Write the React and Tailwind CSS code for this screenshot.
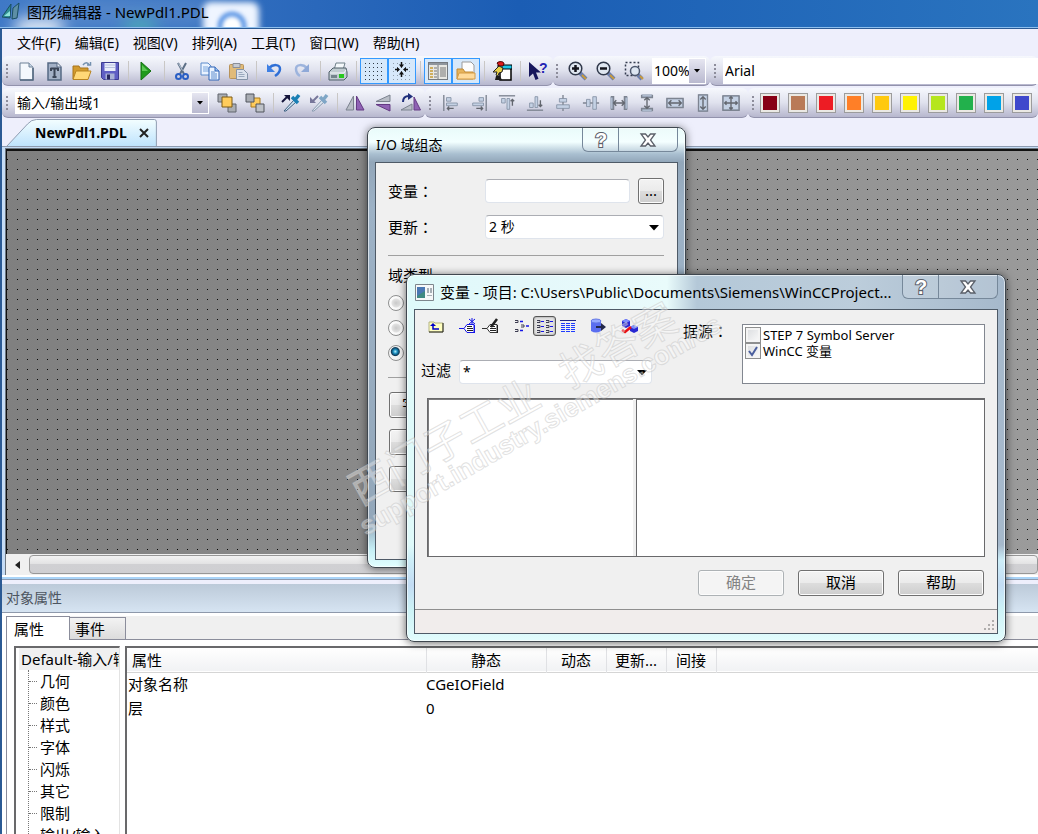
import React, { useState } from "react";

const MENUS = ["文件(F)", "编辑(E)", "视图(V)", "排列(A)", "工具(T)", "窗口(W)", "帮助(H)"];

const SWATCHES = [
  { name: "深红", color: "bg-[#880015]" },
  { name: "棕色", color: "bg-[#b97a57]" },
  { name: "红色", color: "bg-[#ed1c24]" },
  { name: "橙色", color: "bg-[#ff7f27]" },
  { name: "金色", color: "bg-[#ffc90e]" },
  { name: "黄色", color: "bg-[#fff200]" },
  { name: "酸橙", color: "bg-[#b5e61d]" },
  { name: "绿色", color: "bg-[#22b14c]" },
  { name: "青绿", color: "bg-[#00a2e8]" },
  { name: "靛蓝", color: "bg-[#3f48cc]" },
];

const TREE = ["几何", "颜色", "样式", "字体", "闪烁", "其它", "限制", "输出/输入"];

const ROWS = [
  { name: "对象名称", value: "CGeIOField" },
  { name: "层", value: "0" },
];

const TITLE_GLASS =
  "bg-[linear-gradient(180deg,#e9fbfa_0px,#f2ffff_14px,#a9bfd0_26px,#92a6b9_34px,#9db2c6_80px,#93a7ba_90%,#c5eef5_96%,#e2ffff_100%)]";
const FRONT_GLASS =
  "bg-[linear-gradient(180deg,transparent_0,transparent_270px,#cdeef8_285px,#c3dcf4_310px,#cdf3f6_335px,#e2fcfd_100%),linear-gradient(90deg,#dffafa_0px,#e4f8fa_120px,#e9fbfb_260px,#b4c8d8_290px,#bccddb_450px,#a5b8cb_600px)]";

/* ---------- icons ---------- */

function Svg({ children, className = "h-5 w-5" }) {
  return (
    <svg viewBox="0 0 20 20" className={className} fill="none" aria-hidden="true">
      {children}
    </svg>
  );
}

const icons = {
  page: (
    <Svg>
      <path d="M4 2h9l4 4v13H4z" fill="#f4f8fd" stroke="#6f8298" />
      <path d="M13 2v4h4" fill="#c7d6e6" stroke="#6f8298" />
      <path d="M4 19h13V7" stroke="#52677f" strokeWidth="1.500" />
    </Svg>
  ),
  template: (
    <Svg>
      <path d="M4 2h9l4 4v13H4z" fill="#a3b1c7" stroke="#566984" strokeWidth="1.500" />
      <path d="M13 2v4h4" fill="#e6edf6" stroke="#566984" />
      <path d="M6.500 7.500h8M10.500 8v8M8.500 16h4M7 7v3M14 7v3" stroke="#3a4557" strokeWidth="2" />
    </Svg>
  ),
  open: (
    <Svg>
      <path d="M1 5h6l1 2h8v11H1z" fill="#d29a2d" stroke="#a8741a" />
      <path d="M4 10h15l-3 8.500H1z" fill="#ffd877" stroke="#b98420" />
      <path d="M11 4c2-3 5-3 6 0m-2 0h3.500V1" stroke="#7390ae" strokeWidth="1.500" />
    </Svg>
  ),
  save: (
    <Svg>
      <path d="M1.500 1.500h17v17h-15l-2-2z" fill="#5f5fc4" stroke="#3d3d92" />
      <path d="M4.500 2h11v8h-11z" fill="#e9edfa" />
      <path d="M5 4h10M5 6.500h10" stroke="#b8c2de" />
      <path d="M5.500 12.500h9v6h-9z" fill="#a9b2d6" />
      <path d="M7 13.500h3v5H7z" fill="#28285e" />
    </Svg>
  ),
  play: (
    <Svg>
      <path d="M5 1v18l10-9z" fill="#1f9a1b" stroke="#157013" />
      <path d="M6 4v6l6 0z" fill="#5cc754" />
    </Svg>
  ),
  cut: (
    <Svg>
      <path d="M6 2l6 11M14 2L8 13" stroke="#5c6f86" strokeWidth="2" />
      <path d="M6.500 2.500l4 7" stroke="#b9c7d6" />
      <circle cx="6.500" cy="15.500" r="2.500" stroke="#2a5fc4" strokeWidth="2" />
      <circle cx="13.500" cy="15.500" r="2.500" stroke="#2a5fc4" strokeWidth="2" />
    </Svg>
  ),
  copy: (
    <Svg>
      <path d="M1 2h7l3 3v9H1z" fill="#eaf3ff" stroke="#5d8ccc" />
      <path d="M3 6h5M3 8h6M3 10h6" stroke="#7ba6dd" />
      <path d="M9 6h6l4 4v9H9z" fill="#eaf3ff" stroke="#2c62b6" />
      <path d="M15 6v4h4" fill="#9cc0ee" stroke="#2c62b6" />
      <path d="M11 11h4M11 13h6M11 15h6M11 17h6" stroke="#5d8ccc" />
    </Svg>
  ),
  paste: (
    <Svg>
      <rect x="1.500" y="3.500" width="14" height="14" rx="1" fill="#e0bb79" stroke="#b8935a" />
      <path d="M5 2.500h7v4H5z" fill="#c7cbd2" stroke="#8a8f98" />
      <path d="M8.500 8.500h7l4 4v6h-11z" fill="#dce3ee" stroke="#8594a8" />
      <path d="M10.500 11.500h4M10.500 13.500h6M10.500 15.500h6" stroke="#9aa9bd" />
    </Svg>
  ),
  undo: (
    <Svg>
      <path d="M5 7c4-4 11-4 11 1 0 3-2 5-5 7" stroke="#2f6fd6" strokeWidth="2.500" />
      <path d="M3 3v8h8z" fill="#3f80e4" />
    </Svg>
  ),
  redo: (
    <Svg>
      <path d="M15 7c-4-4-11-4-11 1 0 3 1 5 4 7" stroke="#9db4dd" strokeWidth="2.500" />
      <path d="M17 3v8H9z" fill="#8fa9d8" />
    </Svg>
  ),
  print: (
    <Svg>
      <path d="M6 9l2-7h9l-2 7z" fill="#f4f8fb" stroke="#6f8089" />
      <path d="M1 11l4-4h13l1 4v5l-3 3H1z" fill="#c0ccd1" stroke="#4f5f68" />
      <path d="M2 12h14l2-3" stroke="#f4f8fb" />
      <path d="M3 14h6v3H3z" fill="#74848c" />
      <path d="M11 13h5v4h-5z" fill="#28c81e" />
    </Svg>
  ),
  grid: (
    <Svg>
      <path d="M1 2.500h18M1 6.500h18M1 10.500h18M1 14.500h18M1 18.500h18" stroke="#2f3a46" strokeDasharray="1 3" />
    </Svg>
  ),
  snap: (
    <Svg>
      <path d="M1 2.500h18M1 6.500h18M1 10.500h18M1 14.500h18M1 18.500h18" stroke="#8f9daa" strokeDasharray="1 3" />
      <path d="M9.500 1v4M9.500 12v4M3 8.500h4M12 8.500h4" stroke="#111" strokeWidth="1.500" />
      <path d="M7 3.500h5l-2.500 3.500zM7 13.500h5L9.500 10zM5 6v5l3-2.500zM14 6v5l-3-2.500z" fill="#111" />
    </Svg>
  ),
  props: (
    <Svg>
      <rect x=".5" y="1.500" width="19" height="17" fill="#e8e8e3" stroke="#747a80" />
      <path d="M1 3h18" stroke="#8f969d" strokeWidth="2" />
      <path d="M10 4v15" stroke="#747a80" />
      <path d="M2 7h3M2 10h3M2 13h3M2 16h3" stroke="#c59b35" strokeWidth="1.500" />
      <path d="M6 7h3M6 10h3M6 13h3M6 16h3M12 7h6M12 9h6M12 11h6M12 13h6M12 15h6" stroke="#777" />
    </Svg>
  ),
  library: (
    <Svg>
      <path d="M6 1h9l3 3v9H6z" fill="#fdfdfd" stroke="#9b9b9b" />
      <path d="M1 8h6l2 3h8v7H1z" fill="#e6b45c" stroke="#c08a35" />
      <path d="M3 12h16v6H1z" fill="#ffdb9b" stroke="#d49c46" />
    </Svg>
  ),
  bird: (
    <Svg>
      <path d="M8 7h11v12H8z" fill="#fff" stroke="#000" strokeWidth="1.500" />
      <path d="M6 4h14v4H6z" fill="#19c6e8" stroke="#000" />
      <path d="M5 2c2-2 7-2 7 1l-1 2H7z" fill="#e01b1b" stroke="#400" />
      <path d="M1 11l6-6 4 2-1 4-3 1-1 3-2-1 1-3z" fill="#e9d24c" stroke="#222" />
      <path d="M3 19l1-4h4l2 4z" fill="#1c1c1c" />
    </Svg>
  ),
  whatsThis: (
    <Svg>
      <path d="M1 1v15l4-3.500 2.500 6.500 3-1.200L8 11.500h5z" fill="#17175c" />
      <text x="11" y="12" fontSize="14" fontWeight="700" fontFamily="Liberation Sans" fill="#2424b4">
        ?
      </text>
    </Svg>
  ),
  zoomIn: (
    <Svg>
      <path d="M12 12l6 6" stroke="#6d7fae" strokeWidth="4" />
      <path d="M14 14l4 4" stroke="#c79a3d" strokeWidth="2" />
      <circle cx="7.500" cy="7.500" r="6.300" fill="#dfe6f0" stroke="#30384a" strokeWidth="1.500" />
      <path d="M7.500 4v7M4 7.500h7" stroke="#14141c" strokeWidth="2.500" />
    </Svg>
  ),
  zoomOut: (
    <Svg>
      <path d="M12 12l6 6" stroke="#6d7fae" strokeWidth="4" />
      <path d="M14 14l4 4" stroke="#c79a3d" strokeWidth="2" />
      <circle cx="7.500" cy="7.500" r="6.300" fill="#dfe6f0" stroke="#30384a" strokeWidth="1.500" />
      <path d="M4 7.500h7" stroke="#14141c" strokeWidth="2.500" />
    </Svg>
  ),
  zoomArea: (
    <Svg>
      <path d="M1.500 1.500h13v13h-13z" stroke="#333b4e" strokeWidth="1.500" strokeDasharray="2 2" />
      <path d="M14 14l4 4" stroke="#6d7fae" strokeWidth="4" />
      <path d="M16 15l3 3" stroke="#c79a3d" strokeWidth="2" />
      <circle cx="11" cy="10" r="4.500" fill="#dde6f2" stroke="#4d586e" strokeWidth="1.500" />
    </Svg>
  ),
  toFront: (
    <Svg>
      <path d="M1 1h9v8H1z" fill="#a9adb3" stroke="#60656c" />
      <path d="M11 11h8v8h-8z" fill="#a9adb3" stroke="#60656c" />
      <path d="M5 4h10v10H5z" fill="#ffcc5c" stroke="#7c5a14" />
    </Svg>
  ),
  toBack: (
    <Svg>
      <path d="M6 5h9v9H6z" fill="#ffcc5c" stroke="#a97a1d" />
      <path d="M1 1h8v8H1z" fill="#a9adb3" stroke="#50555c" />
      <path d="M11 11h8v8h-8z" fill="#bec2c8" stroke="#50555c" />
    </Svg>
  ),
  pickUp: (
    <Svg>
      <path d="M3 18L13 7l2 2L5 18z" fill="#cfe4f2" stroke="#3c5f80" />
      <path d="M11 4l6 6M14 7l4-5" stroke="#1a7fb4" strokeWidth="3.500" />
      <path d="M1 9l6-6" stroke="#14143a" strokeWidth="2" />
      <path d="M3 2h6v6z" fill="#14143a" />
    </Svg>
  ),
  drop: (
    <Svg>
      <path d="M3 18L13 7l2 2L5 18z" fill="#dde6ef" stroke="#8a9bb0" />
      <path d="M11 4l6 6M14 7l4-5" stroke="#7fa6c6" strokeWidth="3.500" />
      <path d="M3 9l6-6" stroke="#77779a" strokeWidth="2" />
      <path d="M1 4v6h6z" fill="#77779a" />
    </Svg>
  ),
  mirrorH: (
    <Svg>
      <path d="M8.500 3v14H1z" fill="#b9bec7" stroke="#7b828e" />
      <path d="M11.500 3v14H19z" fill="#8f62b4" stroke="#643a84" />
    </Svg>
  ),
  mirrorV: (
    <Svg>
      <path d="M17 8.500V2L3 8.500z" fill="#b9bec7" stroke="#7b828e" />
      <path d="M17 11.500V18L3 11.500z" fill="#8f62b4" stroke="#643a84" />
    </Svg>
  ),
  rotate: (
    <Svg>
      <path d="M0 17l11-6v6z" fill="#b9bec7" stroke="#7b828e" />
      <path d="M13 4v13h6.500z" fill="#8f62b4" stroke="#643a84" />
      <path d="M2 9c0-5 3-6 6-6" stroke="#20307c" strokeWidth="2" />
      <path d="M7 0l5 3.500L7 7z" fill="#20307c" />
    </Svg>
  ),
};

/* greyed alignment icons */
const alignIcons = [
  ["左对齐", "M2 1v18", "M5 4h5v4H5zM5 10h12v3H5z", "M13 16H6m2-2l-2 2 2 2"],
  ["右对齐", "M18 1v18", "M10 4h5v4h-5zM3 10h12v3H3z", "M7 16h7m-2-2l2 2-2 2"],
  ["顶端对齐", "M1 2h18", "M4 5h4v5H4zM10 5h3v12h-3z", "M16 13V6m-2 2l2-2 2 2"],
  ["底端对齐", "M1 18h18", "M4 10h4v5H4zM10 3h3v12h-3z", "M16 7v7m-2-2l2 2 2-2"],
  ["水平居中", "M10 1v4M10 9v3M10 16v3", "M6 5h8v4H6zM3 12h14v4H3z", ""],
  ["垂直居中", "M1 10h4M9 10h3M16 10h3", "M5 6h4v8H5zM12 3h4v14h-4z", ""],
  ["水平间距", "M1 3h3v14H1M19 3h-3v14h3", "M1 3h2v14H1zM17 3h2v14h-2z", "M5 10h10M7 7l-3 3 3 3M13 7l3 3-3 3"],
  ["垂直间距", "M4 1v3h12V1M4 19v-3h12v3", "M4 1h12v2H4zM4 17h12v2H4z", "M10 5v10M7 7l3-3 3 3M7 13l3 3 3-3"],
  ["等宽", "M1 5h18v10H1z", "M1 5h18v10H1z", "M3 10h14M6 7l-3 3 3 3M14 7l3 3-3 3"],
  ["等高", "M5 1h10v18H5z", "M5 1h10v18H5z", "M10 3v14M7 6l3-3 3 3M7 14l3 3 3-3"],
  ["等宽高", "M1 2h18v16H1z", "M1 2h18v16H1z", "M10 3v14M3 10h14M8 5l2-2 2 2M8 15l2 2 2-2M5 8l-2 2 2 2M15 8l2 2-2 2"],
];

function ToolButton({ label, active, children }) {
  return (
    <button
      type="button"
      aria-label={label}
      className={`flex h-[26px] w-7 shrink-0 items-center justify-center border ${
        active ? "border-[#3399ff] bg-[#d6e8fa]" : "border-transparent"
      }`}
    >
      {children}
    </button>
  );
}

function Separator() {
  return (
    <div className="flex w-2 shrink-0 justify-center">
      <div className="h-5 w-px bg-[#c9c7c5]" />
    </div>
  );
}

function Grip() {
  return (
    <div className="flex w-1 shrink-0 flex-col gap-[2px]">
      <i className="h-[2px] w-[2px] bg-[#8d8d9b]" />
      <i className="h-[2px] w-[2px] bg-[#8d8d9b]" />
      <i className="h-[2px] w-[2px] bg-[#8d8d9b]" />
      <i className="h-[2px] w-[2px] bg-[#8d8d9b]" />
    </div>
  );
}

function Strip({ children, className = "" }) {
  return (
    <div
      className={`flex h-[30px] items-center rounded-md border-b border-[#9292ac] bg-linear-to-b from-[#f6f8fd] via-[#e0e2ee] to-[#b7b7ce] ${className}`}
    >
      {children}
    </div>
  );
}

// fullwidth colon drawn in the middle of its cell
function Colon() {
  return <span className="font-['Noto_Sans_CJK_TC',sans-serif]">：</span>;
}

function ToolCombo({ label, value, className }) {
  return (
    <div className={`relative shrink-0 border border-white bg-white ${className}`}>
      <select
        aria-label={label}
        className="block h-full w-full appearance-none overflow-visible pl-px text-sm leading-[18px] text-black outline-none"
      >
        <option>{value}</option>
      </select>
      <span className="pointer-events-none absolute inset-y-0 right-0 flex w-4 items-center justify-center bg-linear-to-b from-[#e6e6f1] to-[#b9b9cf]">
        <svg viewBox="0 0 6 4" className="h-1 w-[6px]" aria-hidden="true">
          <path d="M0 0h6L3 3.500z" fill="#000" />
        </svg>
      </span>
    </div>
  );
}

function FieldCombo({ id, value, className = "" }) {
  return (
    <div className={`relative h-6 rounded-sm border border-[#dfe4ec] border-t-[#abadb3] bg-white ${className}`}>
      <select id={id} className="block h-full w-full appearance-none pl-[3px] text-sm leading-5 outline-none">
        <option>{value}</option>
      </select>
      <svg viewBox="0 0 10 6" className="pointer-events-none absolute right-1 top-[9px] h-[6px] w-[10px]" aria-hidden="true">
        <path d="M0 0h10L5 5.500z" fill="#000" />
      </svg>
    </div>
  );
}

function CaptionButtons() {
  return (
    <div className="flex h-6 shrink-0 overflow-hidden rounded-b-md border border-t-0 border-[#76889a] bg-white/15">
      <button type="button" aria-label="帮助" className="flex w-9 items-center justify-center border-r border-[#76889a]">
        <svg viewBox="0 0 20 20" className="h-5 w-5">
          <text
            x="4"
            y="17"
            fontSize="20"
            fontWeight="700"
            fontFamily="Liberation Sans"
            fill="#fff"
            stroke="#5b6069"
            strokeWidth="2"
            paintOrder="stroke"
          >
            ?
          </text>
        </svg>
      </button>
      <button type="button" aria-label="关闭" className="flex w-[58px] items-center justify-center">
        <svg viewBox="0 0 18 16" className="h-4 w-[18px]" aria-hidden="true">
          <path
            d="M2 2h4.500L9 5l2.500-3H16l-4.500 6 4.500 6h-4.500L9 11l-2.500 3H2l4.500-6z"
            fill="#fff"
            stroke="#5b6069"
            strokeWidth="1.300"
          />
        </svg>
      </button>
    </div>
  );
}

function PushButton({ children, disabled, className = "" }) {
  return (
    <button
      type="button"
      disabled={disabled}
      className={`h-[26px] shrink-0 rounded-[3px] border border-[#707070] bg-[linear-gradient(180deg,#f3f3f3,#ebebeb_48%,#dddddd_50%,#cdcdcd)] pb-[2px] text-[15px] leading-5 shadow-[inset_0_0_0_1px_#fcfcfc] disabled:border-[#adb2b5] disabled:bg-[#f4f4f4] disabled:bg-none disabled:text-[#838383] ${className}`}
    >
      {children}
    </button>
  );
}

/* ---------- main window ---------- */

function TitleBar() {
  return (
    <header className="relative flex h-7 shrink-0 items-start overflow-hidden border-b border-[#8fc0ee] bg-linear-to-r from-[#3f79c6] via-[#1b5db4] to-[#2a74bf]">
      <div className="absolute left-[22px] top-[3px] h-5 w-[196px] rounded-full bg-[#7fa5d8] opacity-60 blur-md" />
      <div className="absolute left-4 top-[20px] h-4 w-[46px] bg-white blur-sm" />
      <div className="absolute left-[124px] top-[19px] h-4 w-8 rounded-full bg-[#4db6b4] opacity-80 blur-sm" />
      <div className="absolute left-[203px] top-[2px] h-9 w-14 rounded-lg bg-[#eff5ff] blur-[3px]" />
      <div className="absolute left-[218px] top-[12px] h-8 w-7 rounded-full border-4 border-[#3f83e0] bg-white blur-[2px]" />
      <svg viewBox="0 0 18 18" className="relative ml-[2px] mt-[2px] h-[18px] w-[18px]" aria-hidden="true">
        <path d="M0 15L9 2l-1 14z" fill="#2f8f94" stroke="#1b4f63" />
        <path d="M11 6l6-5-2 15-5 1z" fill="#5d8fa5" stroke="#1b4f63" />
        <path d="M2 14l6-5v5z" fill="#8fe3d8" />
      </svg>
      <h1 className="relative ml-[7px] truncate text-[15px] leading-6">图形编辑器 - NewPdl1.PDL</h1>
    </header>
  );
}

function Toolbars() {
  return (
    <div className="flex shrink-0 flex-col gap-[2px] overflow-hidden">
      <div className="flex">
        <Strip className="shrink-0 pl-1 pr-px">
          <Grip />
          <div className="ml-[2px] flex">
            <ToolButton label="新建">{icons.page}</ToolButton>
            <ToolButton label="新建模板">{icons.template}</ToolButton>
            <ToolButton label="打开">{icons.open}</ToolButton>
            <ToolButton label="保存">{icons.save}</ToolButton>
          </div>
          <Separator />
          <ToolButton label="运行">{icons.play}</ToolButton>
          <Separator />
          <ToolButton label="剪切">{icons.cut}</ToolButton>
          <ToolButton label="复制">{icons.copy}</ToolButton>
          <ToolButton label="粘贴">{icons.paste}</ToolButton>
          <Separator />
          <ToolButton label="撤消">{icons.undo}</ToolButton>
          <ToolButton label="重做">{icons.redo}</ToolButton>
          <Separator />
          <ToolButton label="打印">{icons.print}</ToolButton>
          <Separator />
          <ToolButton label="网格" active>{icons.grid}</ToolButton>
          <ToolButton label="对齐网格" active>{icons.snap}</ToolButton>
          <Separator />
          <ToolButton label="对象属性" active>{icons.props}</ToolButton>
          <ToolButton label="库" active>{icons.library}</ToolButton>
          <Separator />
          <ToolButton label="向导">{icons.bird}</ToolButton>
          <Separator />
          <ToolButton label="帮助">{icons.whatsThis}</ToolButton>
        </Strip>
        <Strip className="shrink-0 gap-1 pl-[3px] pr-1">
          <Grip />
          <div className="flex">
            <ToolButton label="放大">{icons.zoomIn}</ToolButton>
            <ToolButton label="缩小">{icons.zoomOut}</ToolButton>
            <ToolButton label="缩放区域">{icons.zoomArea}</ToolButton>
          </div>
          <ToolCombo label="缩放比例" value="100%" className="h-[26px] w-[54px]" />
        </Strip>
        <Strip className="min-w-0 flex-1 gap-[5px] pl-1">
          <Grip />
          <input
            aria-label="字体"
            defaultValue="Arial"
            className="h-[26px] min-w-0 flex-1 bg-white px-[2px] text-sm outline-none"
          />
        </Strip>
      </div>

      <div className="flex">
        <Strip className="shrink-0 pl-1">
          <Grip />
          <ToolCombo label="对象" value="输入/输出域1" className="ml-[5px] mr-1 h-[22px] w-[194px]" />
          <ToolButton label="置前">{icons.toFront}</ToolButton>
          <ToolButton label="置后">{icons.toBack}</ToolButton>
          <Separator />
          <ToolButton label="拾取属性">{icons.pickUp}</ToolButton>
          <ToolButton label="分配属性">{icons.drop}</ToolButton>
          <Separator />
          <ToolButton label="水平镜像">{icons.mirrorH}</ToolButton>
          <ToolButton label="垂直镜像">{icons.mirrorV}</ToolButton>
          <ToolButton label="旋转">{icons.rotate}</ToolButton>
        </Strip>
        <Strip className="shrink-0 gap-1 pl-1 pr-[3px]">
          <Grip />
          <div className="flex">
            {alignIcons.map(([label, line, box, arrow]) => (
              <ToolButton key={label} label={label}>
                <Svg className="h-[18px] w-[18px]">
                  <path d={box} fill="#c4d1e4" stroke="#8995a8" />
                  <path d={line} stroke="#7d8491" strokeWidth="1.500" />
                  <path d={arrow} stroke="#62666e" strokeWidth="1.500" />
                </Svg>
              </ToolButton>
            ))}
          </div>
        </Strip>
        <Strip className="min-w-0 flex-1 gap-1 overflow-hidden pl-1">
          <Grip />
          <div className="flex gap-2">
            {SWATCHES.map((s) => (
              <button
                key={s.name}
                type="button"
                aria-label={s.name}
                className={`h-5 w-5 shrink-0 border border-[#9c9c9c] shadow-[inset_0_0_0_2px_#ebe9e4] ${s.color}`}
              />
            ))}
          </div>
        </Strip>
      </div>
    </div>
  );
}

function DocumentArea() {
  return (
    <section className="flex min-h-0 shrink-0 flex-col">
      <div className="flex h-[29px] items-end border-b border-[#8e9bb0]">
        <div className="relative ml-1 flex h-[27px] items-center gap-3 pl-[29px] pr-2">
          <svg viewBox="0 0 154 27" preserveAspectRatio="none" className="absolute inset-0 h-full w-full" aria-hidden="true">
            <defs>
              <linearGradient id="docTab" x1="0" y1="0" x2="0" y2="1">
                <stop offset="0" stopColor="#f3feff" />
                <stop offset="1" stopColor="#bfe3fd" />
              </linearGradient>
            </defs>
            <path d="M1 27L22 5Q26 .5 31 .5H151.500Q153.500 .5 153.500 3V27" fill="url(#docTab)" stroke="#8e9bb0" />
          </svg>
          <span className="relative text-sm font-bold leading-5">NewPdl1.PDL</span>
          <button type="button" aria-label="关闭" className="relative">
            <svg viewBox="0 0 10 10" className="h-[10px] w-[10px]" aria-hidden="true">
              <path d="M1 1l8 8M9 1L1 9" stroke="#222" strokeWidth="2" />
            </svg>
          </button>
        </div>
      </div>
      <div className="border-l-[3px] border-t border-[#c5dcf6]">
        <div className="border-l border-t border-[#6e7780]">
          <div className="border-l border-t-2 border-[#111] bg-[conic-gradient(from_270deg_at_1px_1px,#000_90deg,transparent_0),linear-gradient(100deg,#7f7f7f,#9b9b9b)] bg-[length:10px_10px,100%_100%] bg-[position:10px_8px,0_0]">
            <div className="h-[403px]" />
          </div>
          <div className="flex h-[21px] bg-[#f0f0f0]">
            <button type="button" aria-label="向左滚动" className="flex w-[23px] items-center justify-center">
              <svg viewBox="0 0 5 8" className="h-2 w-[5px]" aria-hidden="true">
                <path d="M5 0v8L0 4z" fill="#222" />
              </svg>
            </button>
            <div className="my-px flex-1 rounded-sm border border-[#979797] bg-[linear-gradient(180deg,#f3f3f3,#e3e3e4_45%,#d0d0d3_50%,#cfcfd2)]" />
          </div>
        </div>
      </div>
      <div className="h-[5px] border-b border-t-2 border-b-[#8e9bb0] border-t-white bg-[#a9d4f8]" />
    </section>
  );
}

function PropertyPanel() {
  return (
    <section className="flex min-h-0 flex-1 flex-col pt-1">
      <h2 className="flex h-7 shrink-0 items-center bg-linear-to-b from-[#bccad9] to-[#d6e4f2] pl-1 text-sm text-[#4d5560]">
        对象属性
      </h2>
      <div className="flex min-h-0 flex-1 flex-col border-t border-[#8e99ab] bg-white pl-1">
        <div role="tablist" className="mt-[3px] flex h-6 shrink-0 items-end border-b border-[#8b8d9b] bg-[#f0f0f0] text-[15px]">
          <button
            type="button"
            role="tab"
            aria-selected="true"
            className="-mb-px h-6 w-16 border border-b-0 border-[#8b8d9b] bg-white pl-[7px] text-left leading-5"
          >
            属性
          </button>
          <button
            type="button"
            role="tab"
            aria-selected="false"
            className="h-[22px] w-14 border border-b-0 border-l-0 border-[#8b8d9b] bg-linear-to-b from-[#f3f3f3] to-[#dcdcdc] pl-[5px] text-left leading-5"
          >
            事件
          </button>
        </div>
        <div className="flex min-h-0 flex-1 gap-[5px] overflow-hidden border-l border-[#8b8d9b] pl-[7px] pt-[6px]">
          <div className="w-[106px] shrink-0 overflow-hidden border-l-2 border-r border-t-2 border-[#69696b] border-r-[#e3e3e3] bg-white pl-[3px] text-[15px] leading-[22px]">
            <div className="overflow-hidden whitespace-nowrap bg-[#f0f0f0] pl-[2px]">Default-输入/输</div>
            <ul className="ml-[9px] border-l border-dotted border-[#777]">
              {TREE.map((item) => (
                <li key={item} className="flex items-center gap-[3px] whitespace-nowrap">
                  <i className="w-2 shrink-0 border-t border-dotted border-[#777]" />
                  <a href="#props" className="text-black">{item}</a>
                </li>
              ))}
            </ul>
          </div>
          <div className="min-w-0 flex-1 overflow-hidden border-l-2 border-t-2 border-[#69696b]">
            <table className="w-full table-fixed border-collapse text-[15px] leading-[22px]">
              <colgroup>
                <col className="w-[299px]" />
                <col className="w-[120px]" />
                <col className="w-[60px]" />
                <col className="w-[60px]" />
                <col className="w-[50px]" />
                <col />
              </colgroup>
              <thead>
                <tr className="h-6 border-b border-[#d5d5d5] bg-linear-to-b from-white to-[#f1f2f4]">
                  <th className="border-r border-[#e0e1e4] pl-[5px] text-left font-normal">属性</th>
                  <th className="border-r border-[#e0e1e4] font-normal">静态</th>
                  <th className="border-r border-[#e0e1e4] font-normal">动态</th>
                  <th className="border-r border-[#e0e1e4] font-normal">更新...</th>
                  <th className="border-r border-[#e0e1e4] font-normal">间接</th>
                  <td />
                </tr>
              </thead>
              <tbody>
                {ROWS.map((row) => (
                  <tr key={row.name} className="h-6">
                    <td className="pl-px">{row.name}</td>
                    <td>{row.value}</td>
                    <td colSpan={4} />
                  </tr>
                ))}
              </tbody>
            </table>
          </div>
        </div>
      </div>
    </section>
  );
}

/* ---------- dialogs ---------- */

function FieldDialog() {
  const [type, setType] = useState("both");
  const radio =
    "block h-4 w-4 appearance-none rounded-full border border-[#8e8f8f] bg-[radial-gradient(circle,#c9c9c9_0,#e2e2e2_4px,#fbfbfb_5px)] checked:bg-[radial-gradient(circle_at_45%_40%,#b5f0ff_0,#1c8fc0_2px,#0f3a58_4px,#f4f4f4_5px)]";

  return (
    <div
      role="dialog"
      aria-label="I/O 域组态"
      className={`absolute left-[367px] top-[127px] w-[319px] rounded-lg border border-[#3f474f] px-[7px] pb-[7px] shadow-[0_1px_8px_rgba(0,0,0,0.55),inset_0_0_0_1px_rgba(255,255,255,0.6)] ${TITLE_GLASS}`}
    >
      <div className="flex h-[34px] items-start justify-between">
        <h2 className="mt-[5px] pl-px text-sm leading-6">I/O 域组态</h2>
        <CaptionButtons />
      </div>
      <div className="h-[398px] border border-[#4e5a67] bg-[#f0f0f0] pl-3 pr-[13px] pt-[15px] text-[15px]">
        <div className="flex items-center">
          <label htmlFor="tag" className="w-[97px] leading-5">变量<Colon /></label>
          <input
            id="tag"
            className="h-6 min-w-0 flex-1 rounded-sm border border-[#dfe4ec] border-t-[#abadb3] bg-white px-1 outline-none"
          />
          <PushButton className="ml-2 w-[26px]">...</PushButton>
        </div>
        <div className="mt-[11px] flex items-center">
          <label htmlFor="update" className="w-[97px] leading-5">更新<Colon /></label>
          <FieldCombo id="update" value="2 秒" className="flex-1" />
        </div>
        <hr className="mt-4 border-[#a0a0a0]" />
        <fieldset className="mt-[9px]">
          <legend className="leading-5">域类型</legend>
          <div className="mt-[10px] flex flex-col gap-[9px]">
            <input type="radio" name="fieldType" aria-label="输出" className={radio} checked={type === "out"} onChange={() => setType("out")} />
            <input type="radio" name="fieldType" aria-label="输入" className={radio} checked={type === "in"} onChange={() => setType("in")} />
            <input type="radio" name="fieldType" aria-label="I/O 域" className={radio} checked={type === "both"} onChange={() => setType("both")} />
          </div>
        </fieldset>
        <hr className="mt-4 border-[#a0a0a0]" />
        <div className="ml-px mt-[14px] flex flex-col gap-[11px]">
          <PushButton className="w-[86px] pl-3 text-left">字体...</PushButton>
          <PushButton className="w-[86px]" />
          <PushButton className="w-[86px]" />
        </div>
      </div>
    </div>
  );
}

function DialogToolbar() {
  const btn = "flex h-5 w-[23px] items-center justify-center";
  return (
    <div className="flex items-center">
      <button type="button" aria-label="上一级" className={btn}>
        <svg viewBox="0 0 16 14" className="h-[14px] w-4" fill="none">
          <path d="M1 3h5l1 1h8v9H1z" fill="#ffffc0" stroke="#b4b482" />
          <path d="M1 13h14V4" stroke="#222" />
          <path d="M11 10H5V6" stroke="#0000c8" strokeWidth="1.500" />
          <path d="M2 7l3-3 3 3z" fill="#0000c8" />
        </svg>
      </button>
      <button type="button" aria-label="新建变量" className={`${btn} ml-[9px]`}>
        <svg viewBox="0 0 17 16" className="h-4 w-[17px]" fill="none">
          <path d="M0 10.500h5M5 10.500l3-4h7v8H8z" stroke="#1414e6" fill="#fff" />
          <path d="M8 8.500h5M8 10.500h6M8 12.500h6" stroke="#222" />
          <path d="M15.500 7v8M13 0v7M10 1l6 5M16 1l-6 5" stroke="#1414e6" />
        </svg>
      </button>
      <button type="button" aria-label="编辑变量" className={btn}>
        <svg viewBox="0 0 17 16" className="h-4 w-[17px]" fill="none">
          <path d="M0 10.500h5M5 10.500l3-4h7v8H8z" stroke="#333" fill="#fff" />
          <path d="M8 8.500h5M8 10.500h6M8 12.500h6M15.500 7v8" stroke="#222" />
          <path d="M9 9l6-8" stroke="#222" strokeWidth="2.500" />
        </svg>
      </button>
      <button type="button" aria-label="树形" className={`${btn} ml-2`}>
        <svg viewBox="0 0 16 14" className="h-[14px] w-4" fill="none">
          <path d="M1 1.500h3v2H1M1 10.500h3v2H1M7 6h3v2H7" stroke="#3c3c50" />
          <path d="M6 2.500h3M6 11.500h3M12 7h3" stroke="#1414e6" strokeWidth="1.500" />
        </svg>
      </button>
      <button
        type="button"
        aria-label="列表"
        aria-pressed="true"
        className="flex h-5 w-[23px] items-center justify-center rounded-[3px] border border-[#555] bg-[#e2e2e2] shadow-[inset_0_0_2px_#777]"
      >
        <svg viewBox="0 0 18 14" className="h-[14px] w-[18px]" fill="none">
          <path d="M1 1.500h3v2H1M1 6.500h3v2H1M1 11.500h3v2H1M10 1.500h3v2h-3M10 6.500h3v2h-3M10 11.500h3v2h-3" stroke="#3c3c50" />
          <path d="M5 2.500h3M5 7.500h3M5 12.500h3M14 2.500h3M14 7.500h3M14 12.500h3" stroke="#1414e6" />
        </svg>
      </button>
      <button type="button" aria-label="详细信息" className={btn}>
        <svg viewBox="0 0 16 14" className="h-[14px] w-4" fill="none">
          <path d="M0 1.500h16" stroke="#222a8c" />
          <path d="M1 4.500h15M1 6.500h15M1 8.500h15M1 10.500h15M1 12.500h15" stroke="#1e3cff" strokeDasharray="4 1" />
        </svg>
      </button>
      <button type="button" aria-label="连接" className={`${btn} ml-2`}>
        <svg viewBox="0 0 17 16" className="h-4 w-[17px]" fill="none">
          <path d="M1 3v10q5 3 10 0V3z" fill="#5a6ef0" />
          <ellipse cx="6" cy="3" rx="5" ry="2" fill="#96aaff" stroke="#6478e6" />
          <path d="M6 8h5V5l5 4-5 4v-3H6z" fill="#23284b" />
        </svg>
      </button>
      <button type="button" aria-label="结构" className={`${btn} ml-2`}>
        <svg viewBox="0 0 17 16" className="h-4 w-[17px]" fill="none">
          <path d="M1 3l4-2 4 2v5L5 10 1 8z" fill="#2828d2" />
          <path d="M1 3l4-2 4 2-4 2z" fill="#7d8cff" />
          <path d="M9 9l4-2 4 2v4l-4 2-4-2z" fill="#2828d2" />
          <path d="M9 9l4-2 4 2-4 2z" fill="#7d8cff" />
          <path d="M1 12l3 2 6-5" stroke="#eb0a14" strokeWidth="2.500" />
        </svg>
      </button>
    </div>
  );
}

function TagDialog() {
  const [sources, setSources] = useState({ step7: false, wincc: true });
  const toggle = (e) => setSources({ ...sources, [e.target.name]: e.target.checked });
  const box =
    "m-0 block h-4 w-4 appearance-none border border-[#8e8f8f] bg-[linear-gradient(135deg,#d9dbde,#fbfbfb)] shadow-[inset_0_0_0_2px_#f4f4f4]";

  return (
    <div
      role="dialog"
      aria-label="变量"
      className={`absolute left-[406px] top-[274px] w-[600px] rounded-lg border border-[#3f474f] px-[7px] pb-[7px] shadow-[0_1px_8px_rgba(0,0,0,0.6),inset_0_0_0_1px_rgba(255,255,255,0.6)] ${FRONT_GLASS}`}
    >
      <div className="flex h-[34px] items-start">
        <svg viewBox="0 0 19 17" className="ml-px mt-[9px] h-[17px] w-[19px] shrink-0" aria-hidden="true">
          <path d="M.5 .5h18v16H.5z" fill="#f6f8f9" stroke="#7d868d" />
          <path d="M2 3h8v11H2z" fill="#3f8a82" />
          <path d="M2 3h8v4l-8 5z" fill="#4a78b4" />
          <path d="M12 4h2v5h-2zM15 4h2v5h-2zM12 11h5v1h-5z" fill="#a7afb5" />
        </svg>
        <h2 className="mt-[5px] min-w-0 flex-1 truncate pl-[6px] text-[15px] leading-6">
          变量 - 项目: C:\Users\Public\Documents\Siemens\WinCCProject...
        </h2>
        <CaptionButtons />
      </div>
      <div className="border border-[#4e5a67] bg-[#f0f0f0]">
        <div className="flex items-start pl-[6px] pr-3 pt-[6px]">
          <div className="w-[262px] shrink-0">
            <div className="pl-[3px]">
              <DialogToolbar />
            </div>
            <div className="mt-6 flex items-start">
              <label htmlFor="filter" className="w-[38px] text-[15px] leading-5">过滤</label>
              <FieldCombo id="filter" value="*" className="w-[193px]" />
            </div>
          </div>
          <span id="sources" className="mt-[5px] w-[59px] shrink-0 text-[15px] leading-5">
            据源<Colon />
          </span>
          <div
            role="group"
            aria-labelledby="sources"
            className="mt-2 h-[60px] min-w-0 flex-1 border border-[#828790] bg-white pl-[2px] pt-[2px] text-[13px] leading-4"
          >
            <label className="flex items-center gap-[2px]">
              <input type="checkbox" name="step7" className={box} checked={sources.step7} onChange={toggle} />
              STEP 7 Symbol Server
            </label>
            <label className="flex items-center gap-[2px]">
              <span className="relative">
                <input type="checkbox" name="wincc" className={box} checked={sources.wincc} onChange={toggle} />
                {sources.wincc && (
                  <svg viewBox="0 0 16 16" className="pointer-events-none absolute inset-0" fill="none" aria-hidden="true">
                    <path d="M4 8l3 4 5-8" stroke="#4b5f9e" strokeWidth="2" />
                  </svg>
                )}
              </span>
              <span>WinCC 变量</span>
            </label>
          </div>
        </div>
        <div className="ml-3 mr-3 mt-[14px] flex h-[159px] gap-[3px] border border-[#69696b] bg-[#f0f0f0]">
          <div className="w-[205px] shrink-0 border-l border-t border-[#7c7c7e] bg-white" />
          <div className="flex-1 border-l border-t border-[#69696b] bg-white" />
        </div>
        <div className="flex justify-end gap-[14px] px-[13px] py-[13px]">
          <PushButton disabled className="w-[86px]">确定</PushButton>
          <PushButton className="w-[86px]">取消</PushButton>
          <PushButton className="w-[86px]">帮助</PushButton>
        </div>
        <div className="flex h-6 items-end justify-end border-t border-[#8f8f8f] bg-[#f1edec] p-[2px]">
          <svg viewBox="0 0 11 11" className="h-[11px] w-[11px]" aria-hidden="true">
            <path d="M8 0h2v2H8zM8 4h2v2H8zM8 8h2v2H8zM4 4h2v2H4zM4 8h2v2H4zM0 8h2v2H0z" fill="#b0adac" />
          </svg>
        </div>
      </div>
    </div>
  );
}

function Watermark() {
  return (
    <svg viewBox="0 0 400 280" className="pointer-events-none absolute left-[340px] top-[280px] h-[280px] w-[400px]" aria-hidden="true">
      <g fill="#ffffff" fillOpacity=".35" stroke="#c4c4c4" strokeOpacity=".5" strokeWidth="1">
        <text x="20" y="226" transform="rotate(-29 20 226)" fontSize="42" fontFamily="Noto Sans CJK SC">
          西门子工业
        </text>
        <text x="230" y="109" transform="rotate(-29 230 109)" fontSize="42" fontFamily="Noto Sans CJK SC">
          找答案
        </text>
        <text x="26" y="256" transform="rotate(-30 26 256)" fontSize="26" fontWeight="700" fontFamily="Liberation Sans">
          support.industry.siemens.com/cs
        </text>
      </g>
    </svg>
  );
}

export default function App() {
  return (
    <div className="relative flex h-screen flex-col overflow-hidden bg-[#eeeffc] font-['Noto_Sans','Noto_Sans_CJK_SC',sans-serif] text-black">
      <TitleBar />
      <main className="flex min-h-0 flex-1 flex-col border-l-2 border-t border-[#2b5a94]">
        <nav className="flex h-[27px] shrink-0 items-center gap-[14px] pl-[15px] text-sm">
          {MENUS.map((m) => (
            <button key={m} type="button" className="shrink-0 leading-5">
              {m}
            </button>
          ))}
        </nav>
        <Toolbars />
        <DocumentArea />
        <PropertyPanel />
      </main>
      <FieldDialog />
      <TagDialog />
      <Watermark />
    </div>
  );
}
